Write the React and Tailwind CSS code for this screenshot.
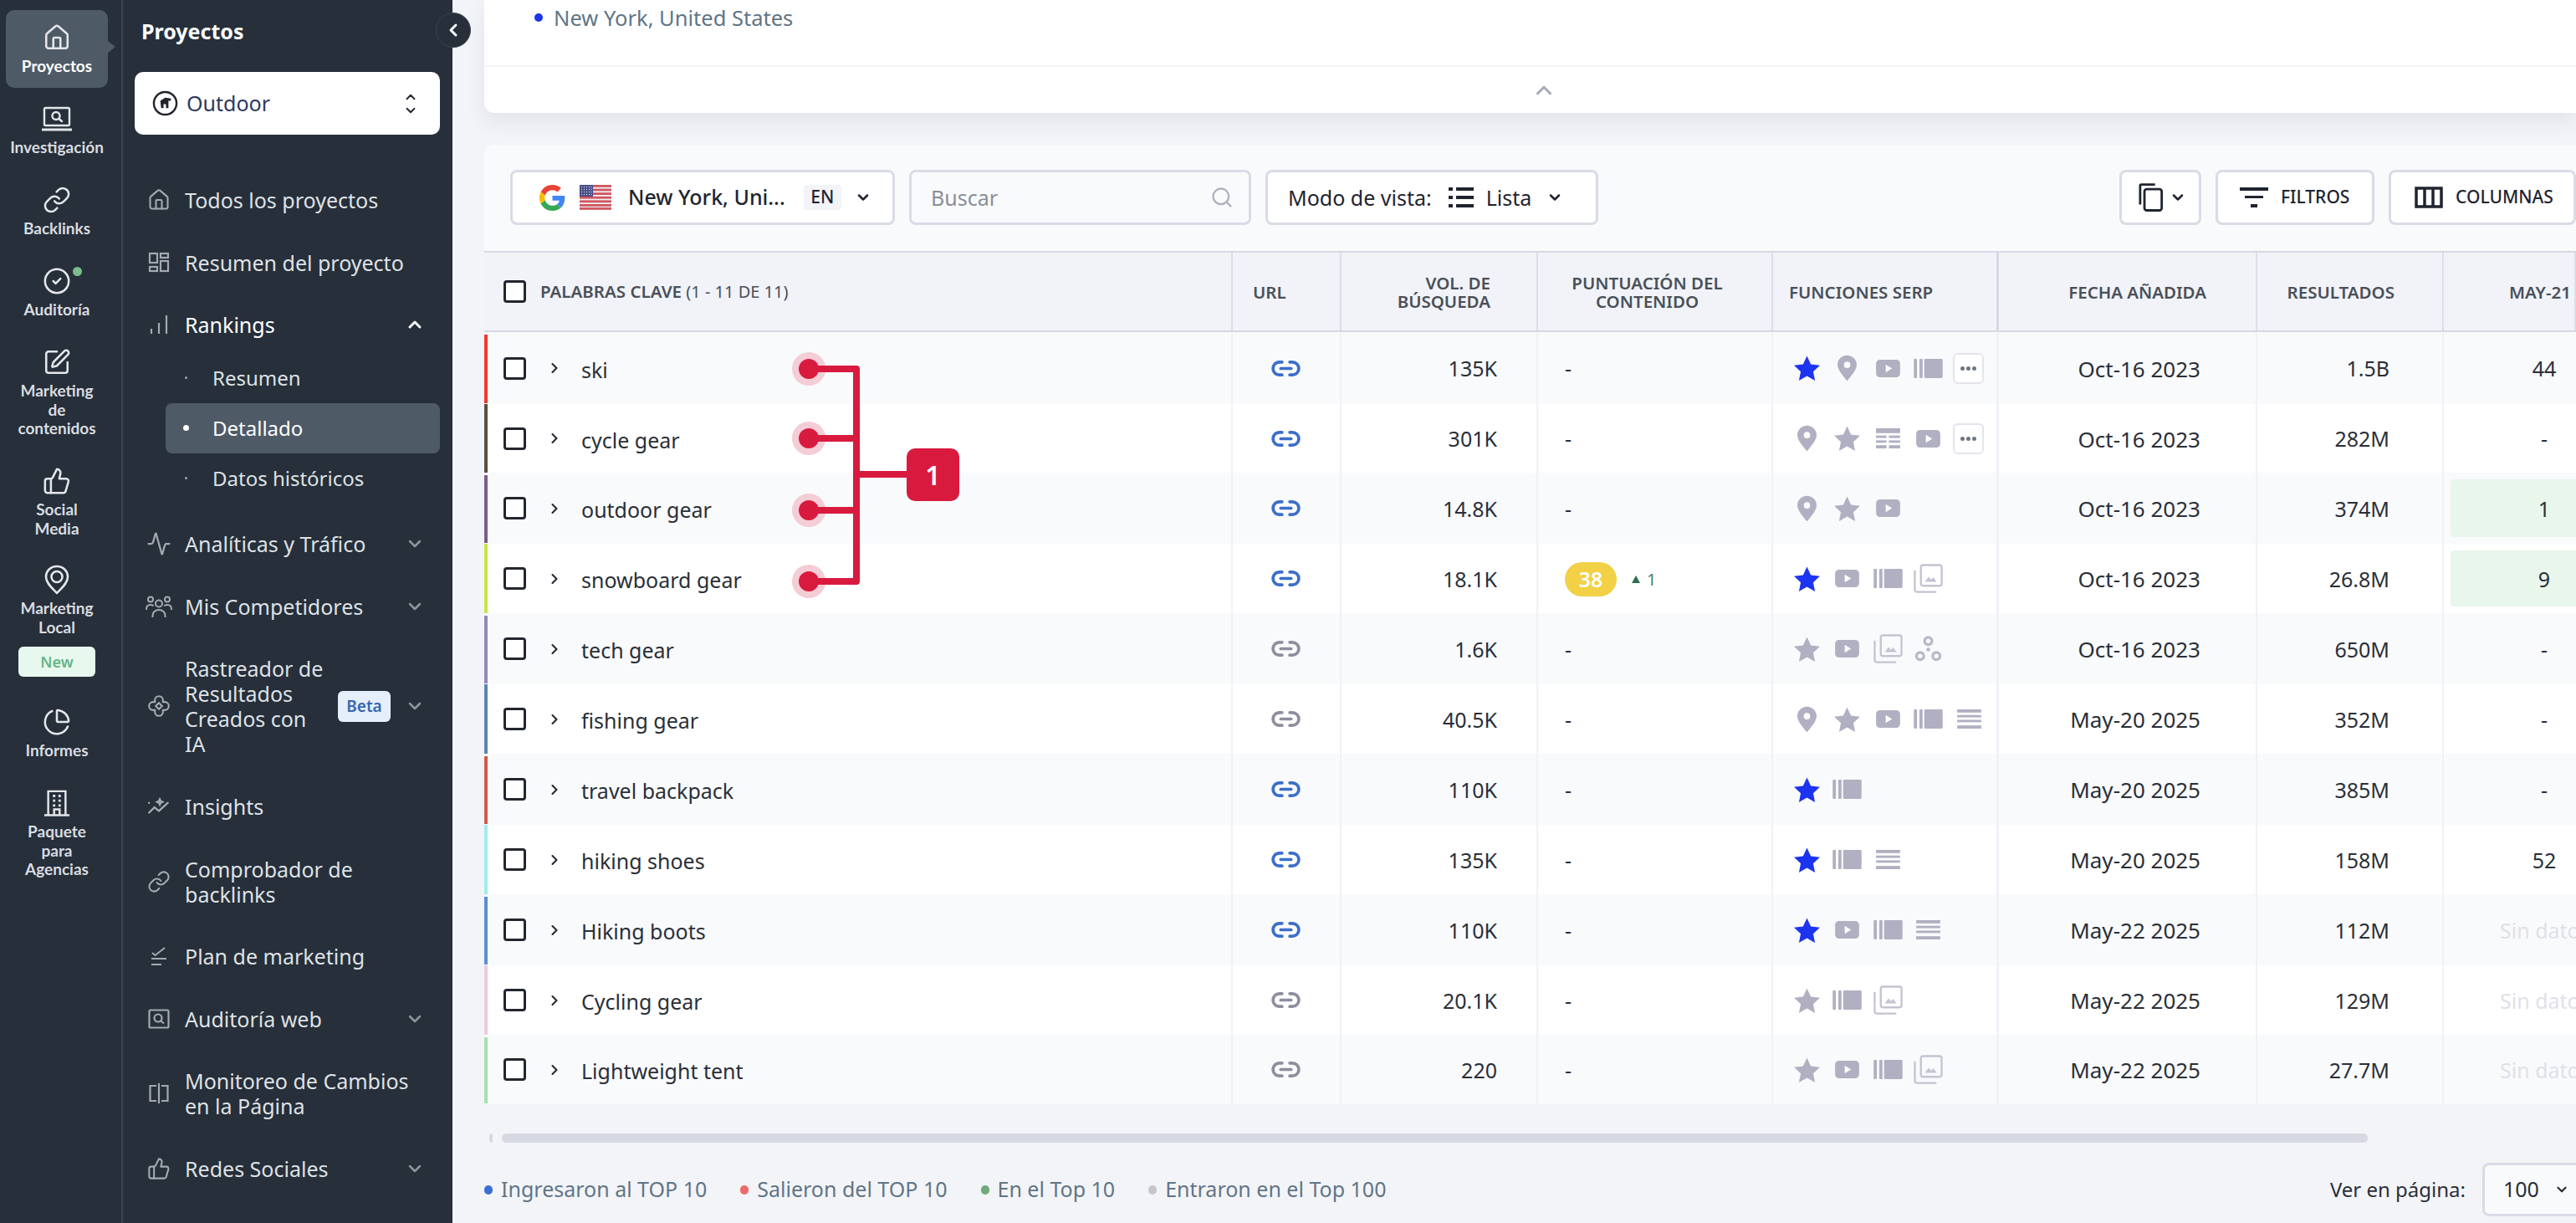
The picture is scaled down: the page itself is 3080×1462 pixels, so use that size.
import React from 'react';
import { House, Link, CircleCheck, SquarePen, ThumbsUp, ChartPie, Activity, ChevronDown, ChevronUp, ChevronRight, ChevronLeft, Link2, Search } from 'lucide-react';

const Star = ({ blue }) => (
  <svg viewBox="0 0 32 30" className={`w-[31px] h-[30px] ${blue ? 'text-[#1c34f0]' : 'text-[#b0b0c2]'}`} fill="currentColor">
    <path d="M16 0l4.8 10.4 11.2 1.3-8.3 7.7 2.2 11.1L16 24.9 6.1 30.5l2.2-11.1L0 11.7l11.2-1.3z" />
  </svg>
);
const Pin = () => (
  <svg viewBox="0 0 24 32" className="w-[23px] h-[32px] text-[#b0b0c2]" fill="currentColor">
    <path fillRule="evenodd" d="M12 0C5.4 0 0 5.2 0 11.8 0 18.4 8 27 12 32c4-5 12-13.6 12-20.2C24 5.2 18.6 0 12 0zm0 8a4 4 0 110 8 4 4 0 010-8z" />
  </svg>
);
const Yt = () => (
  <svg viewBox="0 0 32 24" className="w-[31px] h-[23px] text-[#b0b0c2]" fill="currentColor">
    <path fillRule="evenodd" d="M6 1h20a5 5 0 015 5v12a5 5 0 01-5 5H6a5 5 0 01-5-5V6a5 5 0 015-5zm7 6v10l8-5z" />
  </svg>
);
const Car = () => (
  <svg viewBox="0 0 36 24" className="w-[35px] h-[23px] text-[#b0b0c2]" fill="currentColor">
    <rect x="0" y="0" width="4" height="24" rx="1" /><rect x="7" y="0" width="4" height="24" rx="1" /><rect x="13" y="0" width="23" height="24" rx="1.5" />
  </svg>
);
const Table = () => (
  <svg viewBox="0 0 30 26" className="w-[29px] h-[25px] text-[#b0b0c2]" fill="currentColor">
    <rect x="0" y="0" width="30" height="6" /><rect x="0" y="9" width="13" height="3" /><rect x="16" y="9" width="14" height="3" /><rect x="0" y="15" width="13" height="3" /><rect x="16" y="15" width="14" height="3" /><rect x="0" y="21" width="13" height="4" /><rect x="16" y="21" width="14" height="4" />
  </svg>
);
const Lines = () => (
  <svg viewBox="0 0 30 24" className="w-[29px] h-[23px] text-[#b0b0c2]" fill="currentColor">
    <rect x="0" y="0" width="30" height="4" /><rect x="0" y="7" width="30" height="3" /><rect x="0" y="13" width="30" height="3" /><rect x="0" y="20" width="30" height="4" />
  </svg>
);
const Img = () => (
  <svg viewBox="0 0 36 36" className="w-[35px] h-[35px] text-[#c4c4d2]" fill="none" stroke="currentColor" strokeWidth="2.4">
    <rect x="9" y="1.5" width="25.5" height="25.5" rx="2.5" />
    <path d="M1.5 8v24a2.5 2.5 0 002.5 2.5h24" />
    <path d="M14 22l4.500-6 3 3.500 2.500-3 4.500 5.500z" fill="currentColor" stroke="none" />
  </svg>
);
const Circles = () => (
  <svg viewBox="0 0 34 32" className="w-[33px] h-[31px] text-[#b8b8c8]" fill="none" stroke="currentColor" strokeWidth="3.4">
    <circle cx="17" cy="6.500" r="4.500" /><circle cx="7" cy="25" r="4.500" /><circle cx="27" cy="25" r="4.500" />
    <circle cx="17" cy="17" r="2.400" fill="currentColor" stroke="none" />
  </svg>
);
const More = () => (
  <span className="w-[37px] h-[37px] rounded-[6px] border-2 border-[#e3e4ee] bg-white flex items-center justify-center gap-[2px] ml-[-1px]">
    <span className="w-[5px] h-[5px] rounded-full bg-[#6f7680]" /><span className="w-[5px] h-[5px] rounded-full bg-[#6f7680]" /><span className="w-[5px] h-[5px] rounded-full bg-[#6f7680]" />
  </span>
);
const map = { S: <Star blue />, s: <Star />, p: <Pin />, y: <Yt />, c: <Car />, t: <Table />, l: <Lines />, i: <Img />, o: <Circles />, m: <More /> };

const rows = [
  { k: 'ski', bar: 'bg-[#ee3a2d]', h: 'h-[86px]', url: 1, v: '135K', serp: 'Spycm', d: 'Oct-16 2023', r: '1.5B', m: '44' },
  { k: 'cycle gear', bar: 'bg-[#5b4f3f]', h: 'h-[82px]', url: 1, v: '301K', serp: 'pstym', d: 'Oct-16 2023', r: '282M', m: '-' },
  { k: 'outdoor gear', bar: 'bg-[#7a5f86]', h: 'h-[85px]', url: 1, v: '14.8K', serp: 'psy', d: 'Oct-16 2023', r: '374M', m: '1', g: 1 },
  { k: 'snowboard gear', bar: 'bg-[#c8e645]', h: 'h-[83px]', url: 1, v: '18.1K', score: 1, serp: 'Syci', d: 'Oct-16 2023', r: '26.8M', m: '9', g: 1 },
  { k: 'tech gear', bar: 'bg-[#9488b8]', h: 'h-[85px]', v: '1.6K', serp: 'syio', d: 'Oct-16 2023', r: '650M', m: '-' },
  { k: 'fishing gear', bar: 'bg-[#5e84b0]', h: 'h-[83px]', v: '40.5K', serp: 'psycl', d: 'May-20 2025', r: '352M', m: '-' },
  { k: 'travel backpack', bar: 'bg-[#cf5a4a]', h: 'h-[85px]', url: 1, v: '110K', serp: 'Sc', d: 'May-20 2025', r: '385M', m: '-' },
  { k: 'hiking shoes', bar: 'bg-[#a0ecec]', h: 'h-[83px]', url: 1, v: '135K', serp: 'Scl', d: 'May-20 2025', r: '158M', m: '52' },
  { k: 'Hiking boots', bar: 'bg-[#5d8fd0]', h: 'h-[85px]', url: 1, v: '110K', serp: 'Sycl', d: 'May-22 2025', r: '112M', m: 'Sin dato', n: 1 },
  { k: 'Cycling gear', bar: 'bg-[#eccbd8]', h: 'h-[83px]', v: '20.1K', serp: 'sci', d: 'May-22 2025', r: '129M', m: 'Sin dato', n: 1 },
  { k: 'Lightweight tent', bar: 'bg-[#a6e0b0]', h: 'h-[83px]', v: '220', serp: 'syci', d: 'May-22 2025', r: '27.7M', m: 'Sin dato', n: 1 },
];

const Box = () => <span className="block w-[27px] h-[27px] rounded-[4px] border-[3px] border-[#23262f] bg-white shrink-0" />;

const LaptopSearch = ({ className }) => (
  <svg viewBox="0 0 36 36" className={className} fill="none" stroke="currentColor" strokeWidth="2.4" strokeLinecap="round">
    <rect x="3" y="5" width="30" height="21" rx="1.5" />
    <path d="M1 31h34" strokeWidth="3" />
    <circle cx="17" cy="14.500" r="4.500" /><path d="M20.500 18l3.500 3" />
  </svg>
);
const LocalPin = () => (
  <svg viewBox="0 0 32 36" className="w-[32px] h-[36px]" fill="none" stroke="currentColor" strokeWidth="2.600" strokeLinejoin="round">
    <path d="M16 2C8.300 2 3 7.800 3 14.500 3 22.500 11 28.500 16 34c5-5.500 13-11.500 13-19.500C29 7.800 23.700 2 16 2z" />
    <circle cx="16" cy="14.500" r="6.500" />
  </svg>
);
const Office = () => (
  <svg viewBox="0 0 34 36" className="w-[32px] h-[34px]" fill="none" stroke="currentColor" strokeWidth="2.600">
    <path d="M6 33V3h22v30M1 33.500h32" />
    <path d="M13.500 33v-7h7v7" />
    <path d="M12 9h3M19 9h3M12 15h3M19 15h3M12 21h3M19 21h3" strokeWidth="3" />
  </svg>
);
const Group = () => (
  <svg viewBox="0 0 32 28" className="w-[32px] h-[28px]" fill="none" stroke="currentColor" strokeWidth="2">
    <circle cx="16" cy="10.500" r="4" /><path d="M8.500 27v-2c0-4 3-7 7.500-7s7.500 3 7.500 7v2" />
    <circle cx="6" cy="5.500" r="3" /><circle cx="26" cy="5.500" r="3" />
    <path d="M1 18v-1c0-3 2-5 5-5 1.500 0 3 .5 3.500 1.500M31 18v-1c0-3-2-5-5-5-1.500 0-3 .5-3.500 1.500" />
  </svg>
);

const RailItem = ({ icon, label, active, dot, children, className = '' }) => (
  <div className={`relative w-[122px] ml-[7px] rounded-[10px] pt-[15px] pb-[14px] flex flex-col items-center text-center ${active ? 'bg-[#4f5a67] text-white' : 'text-[#d9dce0]'} ${className}`}>
    <span className="h-[36px] flex items-center justify-center text-[#e4e6e9]">{icon}</span>
    {dot && <span className="absolute top-[16px] left-[80px] w-[11px] h-[11px] rounded-full bg-[#7dbb8c]" />}
    <span className={`font-["Lato",sans-serif] text-[19px] leading-[22.500px] font-bold mt-[5px]`}>{label.map((l) => <span key={l} className="block whitespace-nowrap">{l}</span>)}</span>
    {children}
    {active && <span className="absolute left-[121px] top-[36px] w-0 h-0 border-y-[8px] border-y-transparent border-l-[10px] border-l-[#4f5a67]" />}
  </div>
);

const Dash = () => (
  <svg viewBox="0 0 26 26" className="w-[26px] h-[26px]" fill="none" stroke="currentColor" strokeWidth="2.200">
    <rect x="2" y="2" width="9" height="11" /><rect x="15" y="2" width="9" height="5" /><rect x="2" y="18" width="9" height="5" /><rect x="15" y="11" width="9" height="12" />
  </svg>
);
const Bars = () => (
  <svg viewBox="0 0 26 26" className="w-[26px] h-[26px]" fill="none" stroke="currentColor" strokeWidth="2.200">
    <path d="M4 24v-6M13 24V11M22 24V2" />
  </svg>
);
const Flower = () => (
  <svg viewBox="0 0 28 28" className="w-[30px] h-[30px]" fill="none" stroke="currentColor" strokeWidth="2">
    <path d="M9.500 9.500v-2a4.500 4.500 0 019 0v2h2a4.500 4.500 0 010 9h-2v2a4.500 4.500 0 01-9 0v-2h-2a4.500 4.500 0 010-9z" />
    <path d="M14 10.500l3.500 3.500-3.500 3.500-3.500-3.500z" />
  </svg>
);
const Spark = () => (
  <svg viewBox="0 0 28 28" className="w-[30px] h-[30px]" fill="none" stroke="currentColor" strokeWidth="2.200" strokeLinecap="round">
    <path d="M3 21l6-6 5 4 10-9" /><path d="M3 10v.1M15 6l1 2 2 1-2 1-1 2-1-2-2-1 2-1z" />
  </svg>
);
const Plan = () => (
  <svg viewBox="0 0 26 26" className="w-[26px] h-[26px]" fill="none" stroke="currentColor" strokeWidth="2">
    <path d="M5 9l3.500 3L20 3M4 16h18M4 23h12" />
  </svg>
);
const WebSearch = () => (
  <svg viewBox="0 0 26 26" className="w-[26px] h-[26px]" fill="none" stroke="currentColor" strokeWidth="2.200">
    <rect x="1.500" y="2.500" width="23" height="21" rx="1.500" /><circle cx="12" cy="12" r="4.500" /><path d="M15.500 15.500l3.500 3" />
  </svg>
);
const Split = () => (
  <svg viewBox="0 0 26 26" className="w-[26px] h-[26px]" fill="none" stroke="currentColor" strokeWidth="2.200">
    <path d="M10 4H2.500v18H10M13 1v24M16 4h7.500v18H16" />
  </svg>
);

const MenuItem = ({ icon, label, chev, badge, active, up }) => (
  <div className="flex items-center pl-[26px] pr-[33px] py-[22.300px]">
    <span className="w-[34px] mr-[14px] flex justify-center text-[#a5a9af] shrink-0">{icon}</span>
    <span className={`text-[25px] leading-[30px] flex-1 ${active ? 'text-white' : 'text-[#dfe1e5]'}`}>{label.map((l) => <span key={l} className="block whitespace-nowrap">{l}</span>)}</span>
    {badge && <span className="w-[63px] h-[37px] shrink-0 rounded-[6px] bg-[#e5effa] text-[#3566ae] text-[19px] font-semibold flex items-center justify-center mr-[17px]">Beta</span>}
    {chev && (up ? <ChevronUp className="w-[24px] h-[24px] text-white shrink-0" strokeWidth={3} /> : <ChevronDown className="w-[24px] h-[24px] text-[#8f959c] shrink-0" strokeWidth={2.500} />)}
  </div>
);
const Sub = ({ label, active }) => (
  <div className={`ml-[51px] mr-[15px] h-[60px] flex items-center rounded-[8px] ${active ? 'bg-[#4f5a67] text-white' : 'text-[#dfe1e5]'}`}>
    <span className="w-[24px] flex justify-center ml-[12px]"><span className={active ? 'w-[7px] h-[7px] rounded-full bg-white' : 'w-[3px] h-[3px] rounded-full bg-[#a5a9af]'} /></span>
    <span className="text-[24px] ml-[20px]">{label}</span>
  </div>
);

const Ctrl = ({ className, children }) => (
  <div className={`h-[66px] rounded-[8px] border-[3px] border-[#d9dbe6] bg-white flex items-center text-[#1f2430] shrink-0 ${className}`}>{children}</div>
);
const Cell = ({ className, children }) => <div className={`h-full flex items-center shrink-0 border-r-2 border-[#f1f2f7] ${className}`}>{children}</div>;
const Head = ({ className, children }) => <div className={`h-full flex items-center shrink-0 border-r-2 border-[#dcdee8] text-[20.500px] leading-[22px] font-semibold text-[#4a5058] ${className}`}>{children}</div>;

const Flag = () => (
  <svg viewBox="0 0 38 30" className="w-[38px] h-[30px]">
    <rect width="38" height="30" rx="3" fill="#f2f0f2" />
    {[0, 4.600, 9.200, 13.800, 18.400, 23, 27].map((y) => <rect key={y} y={y} width="38" height="2.800" fill="#d0565f" />)}
    <rect width="16" height="14" fill="#454a85" />
    {[2.500, 5.500, 8.500, 11.500].map((y) => [2.500, 5.500, 8.500, 11.500, 14].map((x) => <circle key={`${x}-${y}`} cx={x} cy={y} r="0.700" fill="#dfe0ef" />))}
  </svg>
);
const G = () => (
  <svg viewBox="0 0 48 48" className="w-[31px] h-[31px]">
    <path fill="#EA4335" d="M24 9.500c3.500 0 6.700 1.200 9.200 3.600l6.900-6.900C35.900 2.400 30.500 0 24 0 14.600 0 6.500 5.400 2.600 13.200l8 6.200C12.400 13.700 17.700 9.500 24 9.500z" />
    <path fill="#4285F4" d="M47 24.500c0-1.600-.1-3.100-.4-4.500H24v9h12.900c-.6 3-2.200 5.500-4.700 7.200l7.700 6C44.400 38 47 31.800 47 24.500z" />
    <path fill="#FBBC05" d="M10.500 28.600c-.5-1.400-.8-3-.8-4.600s.3-3.200.8-4.600l-8-6.200C.9 16.500 0 20.100 0 24s.9 7.500 2.600 10.800z" />
    <path fill="#34A853" d="M24 48c6.500 0 11.900-2.100 15.900-5.800l-7.700-6c-2.200 1.400-4.900 2.300-8.200 2.300-6.300 0-11.600-4.200-13.500-9.900l-8 6.200C6.500 42.600 14.600 48 24 48z" />
  </svg>
);

export default function App() {
  return (
    <div className={`relative flex w-[3080px] h-[1462px] overflow-hidden bg-[#f3f4f8] font-["Noto_Sans","Liberation_Sans",sans-serif]`}>
      <nav className="w-[147px] shrink-0 bg-[#262f3a] border-r-2 border-[#384350] flex flex-col gap-[4.500px] pt-[12px]">
        <RailItem active icon={<House className="w-[34px] h-[34px]" strokeWidth={1.800} />} label={['Proyectos']} />
        <RailItem icon={<LaptopSearch className="w-[36px] h-[36px]" />} label={['Investigación']} />
        <RailItem icon={<Link className="w-[34px] h-[34px]" strokeWidth={1.800} />} label={['Backlinks']} />
        <RailItem dot icon={<CircleCheck className="w-[34px] h-[34px]" strokeWidth={1.800} />} label={['Auditoría']} />
        <RailItem icon={<SquarePen className="w-[34px] h-[34px]" strokeWidth={1.800} />} label={['Marketing', 'de', 'contenidos']} />
        <RailItem icon={<ThumbsUp className="w-[34px] h-[34px]" strokeWidth={1.800} />} label={['Social', 'Media']} />
        <RailItem className="mt-[-1.500px]" icon={<LocalPin />} label={['Marketing', 'Local']}>
          <span className="mt-[12px] mb-[2.500px] w-[92px] h-[36px] rounded-[6px] bg-[#e7f8ee] text-[#66b586] text-[18px] font-semibold flex items-center justify-center">New</span>
        </RailItem>
        <RailItem icon={<ChartPie className="w-[34px] h-[34px]" strokeWidth={1.800} />} label={['Informes']} />
        <RailItem icon={<Office />} label={['Paquete', 'para', 'Agencias']} />
      </nav>

      <aside className="w-[394px] shrink-0 bg-[#262f3a] relative">
        <div className="pl-[22px] h-[86px] flex items-center pb-[10px] text-[25px] font-bold text-white">Proyectos</div>
        <div className="ml-[14px] mr-[15px] h-[75px] rounded-[10px] bg-white flex items-center pl-[21px] pr-[26px]">
          <svg viewBox="0 0 32 32" className="w-[31px] h-[31px] text-[#20242c]" fill="none" stroke="currentColor" strokeWidth="2.500">
            <circle cx="16" cy="16" r="14" /><path d="M10 13l6-4 7 1v3h-3v9h-3v-5h-3v5h-3z" fill="currentColor" stroke="none" />
          </svg>
          <span className="ml-[10px] flex-1 text-[25px] text-[#2e3a5c]">Outdoor</span>
          <span className="flex flex-col text-[#22262e] -space-y-[2px]">
            <ChevronUp className="w-[18px] h-[18px]" strokeWidth={2.500} /><ChevronDown className="w-[18px] h-[18px]" strokeWidth={2.500} />
          </span>
        </div>
        <div className="mt-[41px]">
          <MenuItem icon={<House className="w-[28px] h-[28px]" strokeWidth={1.800} />} label={['Todos los proyectos']} />
          <MenuItem icon={<Dash />} label={['Resumen del proyecto']} />
          <MenuItem icon={<Bars />} label={['Rankings']} chev up active />
          <div className="mt-[-4px] mb-[11.200px]">
            <Sub label="Resumen" />
            <Sub label="Detallado" active />
            <Sub label="Datos históricos" />
          </div>
          <MenuItem icon={<Activity className="w-[30px] h-[30px]" strokeWidth={1.800} />} label={['Analíticas y Tráfico']} chev />
          <MenuItem icon={<Group />} label={['Mis Competidores']} chev />
          <MenuItem icon={<Flower />} label={['Rastreador de', 'Resultados', 'Creados con', 'IA']} chev badge />
          <MenuItem icon={<Spark />} label={['Insights']} />
          <MenuItem icon={<Link className="w-[28px] h-[28px]" strokeWidth={1.800} />} label={['Comprobador de', 'backlinks']} />
          <MenuItem icon={<Plan />} label={['Plan de marketing']} />
          <MenuItem icon={<WebSearch />} label={['Auditoría web']} chev />
          <MenuItem icon={<Split />} label={['Monitoreo de Cambios', 'en la Página']} />
          <MenuItem icon={<ThumbsUp className="w-[28px] h-[28px]" strokeWidth={1.800} />} label={['Redes Sociales']} chev />
        </div>
        <span className="absolute left-[374px] top-[15px] w-[42px] h-[42px] rounded-full bg-[#262f3a] border border-[#3a4552] flex items-center justify-center text-white z-10">
          <ChevronLeft className="w-[24px] h-[24px]" strokeWidth={3} />
        </span>
      </aside>

      <main className="flex-1 min-w-0 pl-[38px]">
        <section className="h-[135px] bg-white rounded-bl-[12px] shadow-[0_12px_24px_rgba(40,50,80,0.08)]">
          <div className="h-[80px] border-b-2 border-[#f3f4f7] pl-[60px] pb-[36px] flex items-center gap-[13px] text-[25.500px] text-[#5f7586]">
            <span className="w-[10px] h-[10px] rounded-full bg-[#1c34f0]" />
            <span>New York, United States</span>
          </div>
          <div className="h-[55px] flex items-center justify-center text-[#a8abb8] pl-[32px]"><ChevronUp className="w-[30px] h-[30px]" strokeWidth={2.500} /></div>
        </section>

        <section className="mt-[38px] bg-[#f9fafc] rounded-tl-[12px]">
          <div className="h-[127px] pl-[31px] pt-[30px] flex gap-[17px]">
            <Ctrl className="w-[460px] pl-[32px]">
              <G />
              <span className="ml-[17px]"><Flag /></span>
              <span className="ml-[20px] text-[25px] font-medium whitespace-nowrap">New York, Uni...</span>
              <span className="ml-[22px] w-[45px] h-[30px] rounded-[4px] bg-[#f3f4f8] text-[21px] font-medium flex items-center justify-center">EN</span>
              <ChevronDown className="ml-[16px] w-[20px] h-[20px]" strokeWidth={3} />
            </Ctrl>
            <Ctrl className="w-[409px] pl-[23px] pr-[18px] !bg-[#f9fafc]">
              <span className="flex-1 text-[25px] text-[#8b8e98] pt-[2px]">Buscar</span>
              <Search className="w-[28px] h-[28px] text-[#aeb1bb]" strokeWidth={2} />
            </Ctrl>
            <Ctrl className="w-[398px] pl-[24px]">
              <span className="text-[25px] whitespace-nowrap pt-[2px]">Modo de vista:</span>
              <svg viewBox="0 0 30 26" className="ml-[20px] w-[30px] h-[26px]" fill="currentColor"><rect x="0" y="1" width="5" height="4" /><rect x="9" y="1" width="21" height="4" /><rect x="0" y="11" width="5" height="4" /><rect x="9" y="11" width="21" height="4" /><rect x="0" y="21" width="5" height="4" /><rect x="9" y="21" width="21" height="4" /></svg>
              <span className="ml-[15px] text-[25px] pt-[2px]">Lista</span>
              <ChevronDown className="ml-[18px] w-[20px] h-[20px]" strokeWidth={3} />
            </Ctrl>
            <Ctrl className="ml-auto w-[98px] pl-[20px]">
              <svg viewBox="0 0 32 36" className="w-[30px] h-[34px]" fill="none" stroke="currentColor" strokeWidth="3"><path d="M2 27V3a1.500 1.500 0 011.500-1.500H21" /><rect x="7.500" y="7.500" width="22" height="27" rx="3" /></svg>
              <ChevronDown className="ml-[7px] w-[20px] h-[20px]" strokeWidth={3} />
            </Ctrl>
            <Ctrl className="w-[190px] pl-[26px]">
              <svg viewBox="0 0 34 24" className="w-[34px] h-[24px]" fill="currentColor"><rect x="0" y="0" width="34" height="4" /><rect x="6" y="10" width="22" height="3" /><rect x="13" y="20" width="8" height="4" /></svg>
              <span className="ml-[15px] text-[21px] font-medium">FILTROS</span>
            </Ctrl>
            <Ctrl className="w-[224px] pl-[28px]">
              <svg viewBox="0 0 34 26" className="w-[34px] h-[26px]" fill="none" stroke="currentColor" strokeWidth="3.500"><rect x="2" y="2" width="30" height="22" /><path d="M12 2v22M22 2v22" /></svg>
              <span className="ml-[15px] text-[21px] font-medium">COLUMNAS</span>
            </Ctrl>
          </div>

          <div className="h-[97px] bg-[#f1f3f8] border-y-2 border-[#d6d8e4] flex">
            <Head className="w-[895px] pl-[23px] gap-[17px]"><Box /><span className="whitespace-nowrap">PALABRAS CLAVE <span className="font-normal text-[20px]">(1 - 11 DE 11)</span></span></Head>
            <Head className="w-[130px] pl-[24px]">URL</Head>
            <Head className="w-[235px] justify-end text-right pr-[55px]"><span>VOL. DE<br />BÚSQUEDA</span></Head>
            <Head className="w-[281px] justify-center text-center pr-[18px]"><span>PUNTUACIÓN DEL<br />CONTENIDO</span></Head>
            <Head className="w-[270px] pl-[19px] border-r-[3px] border-r-[#d6d8e4]">FUNCIONES SERP</Head>
            <Head className="w-[309px] justify-end pr-[59px]">FECHA AÑADIDA</Head>
            <Head className="w-[223px] justify-end pr-[57px]">RESULTADOS</Head>
            <Head className="w-[158px] pl-[78px] border-r-0">MAY-21</Head>
          </div>

          {rows.map((r, i) => (
            <div key={r.k} className={`${r.h} flex text-[25px] text-[#2a2f38] ${i % 2 === 0 ? 'bg-[#f9fafc]' : 'bg-white'}`}>
              <Cell className="w-[895px]">
                <span className={`w-[4px] self-stretch ${r.bar} ${i % 2 === 0 ? 'mt-[3px] mb-[1px]' : ''}`} />
                <span className="ml-[19px]"><Box /></span>
                <ChevronRight className="ml-[24px] w-[20px] h-[20px] text-[#23262f]" strokeWidth={2.500} />
                <span className="ml-[22px] whitespace-nowrap pt-[5px]">{r.k}</span>
              </Cell>
              <Cell className="w-[130px] pl-[45px]">
                <Link2 className={`w-[37px] h-[37px] ${r.url ? 'text-[#3b6fc9]' : 'text-[#8d8f9e]'}`} strokeWidth={2.400} />
              </Cell>
              <Cell className="w-[235px] justify-end pr-[47px] pt-[2px]">{r.v}</Cell>
              <Cell className="w-[281px] pl-[32px] pt-[2px]">
                {r.score ? (
                  <span className="flex items-center">
                    <span className="w-[62px] h-[41px] rounded-full bg-[#f2d146] text-white font-semibold text-[25px] flex items-center justify-center">38</span>
                    <span className="ml-[18px] w-0 h-0 border-x-[5px] border-x-transparent border-b-[9px] border-b-[#2f6f4c]" />
                    <span className="ml-[8px] text-[20px] text-[#47806a]">1</span>
                  </span>
                ) : '-'}
              </Cell>
              <Cell className="w-[270px] pl-[16px] border-r-[3px] border-r-[#f1f2f7]">
                {[...r.serp].map((c, j) => <span key={j} className="w-[48.500px] flex justify-center shrink-0">{map[c]}</span>)}
              </Cell>
              <Cell className="w-[309px] justify-end pr-[66px] pt-[2px] text-[26px]">{r.d}</Cell>
              <Cell className="w-[223px] justify-end pr-[63px] pt-[2px]">{r.r}</Cell>
              <div className="w-[158px] h-full shrink-0 relative flex items-center pt-[2px]">
                {r.g && <span className="absolute left-[8px] right-0 top-[8px] bottom-[8px] bg-[#e8f6ec] rounded-l-[4px]" />}
                {r.n ? <span className="pl-[67px] whitespace-nowrap text-[#dfe1e8]">{r.m}</span> : <span className="relative w-[240px] shrink-0 text-center">{r.m}</span>}
              </div>
            </div>
          ))}
        </section>

        <div className="mt-[35px] h-[11px] flex items-center">
          <span className="ml-[6px] w-[4px] h-[11px] rounded-l-full bg-[#d7d9e2]" />
          <span className="ml-[11px] w-[2231px] h-[11px] rounded-full bg-[#d6d8e2]" />
        </div>
        <div className="mt-[24px] h-[64px] flex items-center">
          <div className="flex items-center text-[25px] text-[#5f7586] gap-[40px] whitespace-nowrap">
            <span className="flex items-center gap-[10px]"><span className="w-[10px] h-[11px] rounded-full bg-[#3b6fd6]" />Ingresaron al TOP 10</span>
            <span className="flex items-center gap-[10px]"><span className="w-[10px] h-[11px] rounded-full bg-[#ee6a6a]" />Salieron del TOP 10</span>
            <span className="flex items-center gap-[10px]"><span className="w-[10px] h-[11px] rounded-full bg-[#6faa7d]" />En el Top 10</span>
            <span className="flex items-center gap-[10px]"><span className="w-[10px] h-[11px] rounded-full bg-[#c4c6cc]" />Entraron en el Top 100</span>
          </div>
          <div className="ml-auto flex items-center">
            <span className="text-[24px] text-[#2a2f38] whitespace-nowrap">Ver en página:</span>
            <span className="ml-[20px] w-[112px] h-[64px] rounded-l-[8px] border-[3px] border-r-0 border-[#d9dbe6] bg-[#f9fafc] flex items-center pl-[22px] text-[25px] text-[#2a2f38]">
              100<ChevronDown className="ml-[18px] w-[18px] h-[18px]" strokeWidth={3} />
            </span>
          </div>
        </div>
      </main>

      <svg viewBox="0 0 120 300" className="absolute left-[947px] top-[420px] w-[120px] h-[300px] pointer-events-none overflow-visible">
        {[21, 104, 190, 275].map((y) => (
          <g key={y}>
            <circle cx="20" cy={y} r="20" fill="#f4cdd6" />
            <circle cx="20" cy={y} r="12" fill="#d91a3f" />
          </g>
        ))}
        <path d="M20 21h57v254H20M20 104h57M20 190h57M77 147h60" fill="none" stroke="#d91a3f" strokeWidth="8" strokeLinejoin="round" />
      </svg>
      <span className="absolute left-[1084px] top-[536px] w-[63px] h-[63px] rounded-[10px] bg-[#d91a3f] text-white text-[32px] font-semibold flex items-center justify-center">1</span>
    </div>
  );
}
